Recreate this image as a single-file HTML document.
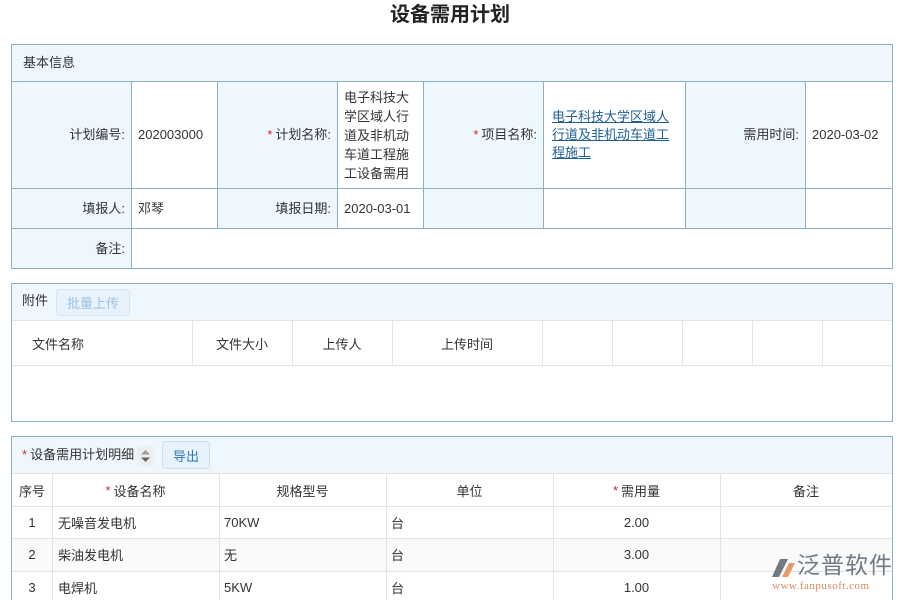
<!DOCTYPE html>
<html><head><meta charset="utf-8"><style>
*{box-sizing:border-box;margin:0;padding:0}
html,body{width:900px;height:600px;overflow:hidden}
body{background:#fff;font-family:"Liberation Sans","Noto Sans CJK SC",sans-serif;font-size:13px;color:#333}
#w{position:relative;width:900px;height:600px;overflow:hidden}
.a{position:absolute}
.t{left:0;width:900px;top:1px;text-align:center;font-size:20px;font-weight:bold;color:#222;line-height:28px}
.c{position:absolute;border:1px solid #8fb0c4;display:flex;align-items:center;padding:0 6px;line-height:18px}
.l{background:#eef6fe;justify-content:flex-end}
.s{color:#d9272e;margin-right:3px}
.g{position:absolute;border-right:1px solid #e3e3e3;border-bottom:1px solid #e3e3e3;display:flex;align-items:center;padding:0 8px}
.btn{position:absolute;border:1px solid #c9def0;background:#e8f2fc;border-radius:4px;display:flex;align-items:center;justify-content:center}
</style></head><body><div id="w">
<div class="a t">设备需用计划</div>

<div class="c" style="left:11px;top:44px;width:882px;height:38px;background:#eef6fe;justify-content:flex-start;padding-left:11px">基本信息</div>
<div class="c l" style="left:11px;top:81px;width:121px;height:108px">计划编号:</div>
<div class="c" style="left:131px;top:81px;width:87px;height:108px">202003000</div>
<div class="c l" style="left:217px;top:81px;width:121px;height:108px"><span class="s">*</span>计划名称:</div>
<div class="c" style="left:337px;top:81px;width:87px;height:108px;line-height:19px">电子科技大学区域人行道及非机动车道工程施工设备需用</div>
<div class="c l" style="left:423px;top:81px;width:121px;height:108px"><span class="s">*</span>项目名称:</div>
<div class="c" style="left:543px;top:81px;width:143px;height:108px;color:#1f5f95;text-decoration:underline;line-height:18px;padding:0 8px">电子科技大学区域人行道及非机动车道工程施工</div>
<div class="c l" style="left:685px;top:81px;width:121px;height:108px">需用时间:</div>
<div class="c" style="left:805px;top:81px;width:88px;height:108px">2020-03-02</div>

<div class="c l" style="left:11px;top:188px;width:121px;height:41px">填报人:</div>
<div class="c" style="left:131px;top:188px;width:87px;height:41px">邓琴</div>
<div class="c l" style="left:217px;top:188px;width:121px;height:41px">填报日期:</div>
<div class="c" style="left:337px;top:188px;width:87px;height:41px">2020-03-01</div>
<div class="c l" style="left:423px;top:188px;width:121px;height:41px"></div>
<div class="c" style="left:543px;top:188px;width:143px;height:41px"></div>
<div class="c l" style="left:685px;top:188px;width:121px;height:41px"></div>
<div class="c" style="left:805px;top:188px;width:88px;height:41px"></div>
<div class="c l" style="left:11px;top:228px;width:121px;height:41px">备注:</div>
<div class="c" style="left:131px;top:228px;width:762px;height:41px"></div>

<div class="a" style="left:11px;top:283px;width:882px;height:139px;border:1px solid #8fb0c4"></div>
<div class="a" style="left:12px;top:284px;width:880px;height:37px;background:#eef6fe;border-bottom:1px solid #e3e3e3"></div>
<div class="a" style="left:22px;top:292px;line-height:18px">附件</div>
<div class="btn" style="left:56px;top:289px;width:74px;height:27px;color:#9cc3e2;background:#e8f2fc;border-color:#d6e6f4">批量上传</div>
<div class="g" style="left:12px;top:321px;width:181px;height:45px;padding-left:20px">文件名称</div>
<div class="g" style="left:192px;top:321px;width:101px;height:45px;justify-content:center">文件大小</div>
<div class="g" style="left:292px;top:321px;width:101px;height:45px;justify-content:center">上传人</div>
<div class="g" style="left:392px;top:321px;width:151px;height:45px;justify-content:center">上传时间</div>
<div class="g" style="left:542px;top:321px;width:71px;height:45px"></div>
<div class="g" style="left:612px;top:321px;width:71px;height:45px"></div>
<div class="g" style="left:682px;top:321px;width:71px;height:45px"></div>
<div class="g" style="left:752px;top:321px;width:71px;height:45px"></div>
<div class="g" style="left:822px;top:321px;width:70px;height:45px;border-right:none"></div>

<div class="a" style="left:11px;top:436px;width:882px;height:190px;border:1px solid #8fb0c4"></div>
<div class="a" style="left:12px;top:437px;width:880px;height:37px;background:#eef6fe;border-bottom:1px solid #e3e3e3"></div>
<div class="a" style="left:22px;top:446px;line-height:18px"><span class="s">*</span>设备需用计划明细</div>
<div class="a" style="left:137px;top:446px;width:17px;height:20px;background:#eceff2"></div>
<svg class="a" style="left:139px;top:448px" width="13" height="16"><path d="M2 6.5L6.5 2 11 6.5Z" fill="#999"/><path d="M2 9.5L6.5 14 11 9.5Z" fill="#666"/></svg>
<div class="btn" style="left:162px;top:441px;width:48px;height:28px;color:#2b78c2">导出</div>

<div class="g" style="left:12px;top:474px;width:41px;height:33px;justify-content:center;padding:0">序号</div>
<div class="g" style="left:52px;top:474px;width:168px;height:33px;justify-content:center"><span class="s">*</span>设备名称</div>
<div class="g" style="left:219px;top:474px;width:168px;height:33px;justify-content:center">规格型号</div>
<div class="g" style="left:386px;top:474px;width:168px;height:33px;justify-content:center">单位</div>
<div class="g" style="left:553px;top:474px;width:168px;height:33px;justify-content:center"><span class="s">*</span>需用量</div>
<div class="g" style="left:720px;top:474px;width:172px;height:33px;justify-content:center;border-right:none">备注</div>

<div class="a" style="left:12px;top:539px;width:880px;height:33px;background:#fafafa"></div>
<div class="g" style="left:12px;top:506px;width:41px;height:33px;justify-content:center;padding:0">1</div>
<div class="g" style="left:52px;top:506px;width:168px;height:33px;padding-left:6px">无噪音发电机</div>
<div class="g" style="left:219px;top:506px;width:168px;height:33px;padding-left:5px">70KW</div>
<div class="g" style="left:386px;top:506px;width:168px;height:33px;padding-left:5px">台</div>
<div class="g" style="left:553px;top:506px;width:168px;height:33px;justify-content:center">2.00</div>
<div class="g" style="left:720px;top:506px;width:172px;height:33px;border-right:none"></div>
<div class="g" style="left:12px;top:538px;width:41px;height:34px;justify-content:center;padding:0">2</div>
<div class="g" style="left:52px;top:538px;width:168px;height:34px;padding-left:6px">柴油发电机</div>
<div class="g" style="left:219px;top:538px;width:168px;height:34px;padding-left:5px">无</div>
<div class="g" style="left:386px;top:538px;width:168px;height:34px;padding-left:5px">台</div>
<div class="g" style="left:553px;top:538px;width:168px;height:34px;justify-content:center">3.00</div>
<div class="g" style="left:720px;top:538px;width:172px;height:34px;border-right:none"></div>
<div class="g" style="left:12px;top:571px;width:41px;height:33px;justify-content:center;padding:0">3</div>
<div class="g" style="left:52px;top:571px;width:168px;height:33px;padding-left:6px">电焊机</div>
<div class="g" style="left:219px;top:571px;width:168px;height:33px;padding-left:5px">5KW</div>
<div class="g" style="left:386px;top:571px;width:168px;height:33px;padding-left:5px">台</div>
<div class="g" style="left:553px;top:571px;width:168px;height:33px;justify-content:center">1.00</div>
<div class="g" style="left:720px;top:571px;width:172px;height:33px;border-right:none"></div>

<svg class="a" style="left:770px;top:555px" width="26" height="24"><path d="M2 22L10 4h8L9 22Z" fill="#6f7a86"/><path d="M12 22l7-14h6l-7 14Z" fill="#e39a6c"/></svg>
<div class="a" style="left:797px;top:551px;font-size:23px;color:#6f7a86;line-height:28px;letter-spacing:1px">泛普软件</div>
<div class="a" style="left:772px;top:580px;font-family:'Liberation Serif',serif;font-size:11px;color:#d88a5c;line-height:13px;letter-spacing:0.5px">www.fanpusoft.com</div>
</div></body></html>
